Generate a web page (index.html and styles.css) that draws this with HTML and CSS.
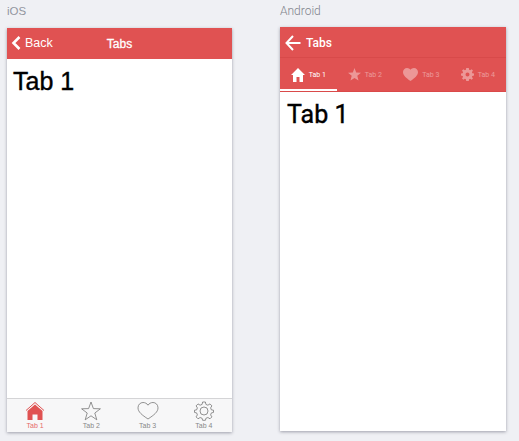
FILE: index.html
```html
<!DOCTYPE html>
<html>
<head>
    <title>Tabs</title>
    <link rel="stylesheet" href="styles.css">
</head>
<body>
    <div class="previews">
        <div class="preview">
            <div class="platform">iOS</div>
            <div class="phone ios">
                <div class="ios-header">
                    <div class="back">
                        <svg width="10" height="16" viewBox="0 0 10 16"><path d="M8.500 2 L2.500 8 L8.500 14" fill="none" stroke="#fff" stroke-width="2.600"/></svg>
                        <span>Back</span>
                    </div>
                    <div class="ios-title">Tabs</div>
                </div>
                <div class="content ios-content">Tab 1</div>
                <div class="ios-tabs">
                    <div class="ios-tab active">
                        <svg width="20" height="20" viewBox="0 0 20 20"><path d="M1 9.500 L10 1.500 L19 9.500" fill="none" stroke="#e05252" stroke-width="1"/><path d="M2.500 10 L10 3.500 L17.500 10 V19 H12.500 V13.500 H7.500 V19 H2.500 Z" fill="#e05252"/></svg>
                        <span>Tab 1</span>
                    </div>
                    <div class="ios-tab">
                        <svg width="20" height="20" viewBox="0 0 20 20"><path d="M10 1 L12.400 7.600 L19.400 7.800 L13.800 12 L15.800 18.800 L10 14.800 L4.200 18.800 L6.200 12 L.6 7.800 L7.600 7.600 Z" fill="none" stroke="#777" stroke-width=".8"/></svg>
                        <span>Tab 2</span>
                    </div>
                    <div class="ios-tab">
                        <svg width="22" height="20" viewBox="0 0 22 20"><path d="M11 18 C5 14 1 11 1 6.800 C1 3.600 3.400 1.500 6 1.500 C8 1.500 10 2.500 11 4.200 C12 2.500 14 1.500 16 1.500 C18.600 1.500 21 3.600 21 6.800 C21 11 17 14 11 18 Z" fill="none" stroke="#777" stroke-width=".8"/></svg>
                        <span>Tab 3</span>
                    </div>
                    <div class="ios-tab">
                        <svg width="20" height="20" viewBox="0 0 20 20" fill="none" stroke="#777" stroke-width=".8"><circle cx="10" cy="10" r="4"/><path d="M8.600 1 H11.400 L11.900 3.400 L13.900 4.200 L16 2.900 L17.900 4.900 L16.600 6.900 L17.400 8.900 L19.500 9.200 V11.400 L17.400 11.900 L16.600 13.900 L17.900 15.900 L16 17.800 L13.900 16.500 L11.900 17.300 L11.400 19.300 H8.600 L8.100 17.300 L6.100 16.500 L4 17.800 L2.100 15.900 L3.400 13.900 L2.600 11.900 L.5 11.400 V9.200 L2.600 8.900 L3.400 6.900 L2.100 4.900 L4 2.900 L6.100 4.200 L8.100 3.400 Z"/></svg>
                        <span>Tab 4</span>
                    </div>
                </div>
            </div>
        </div>
        <div class="preview android-preview">
            <div class="platform">Android</div>
            <div class="phone android">
                <div class="android-bar">
                    <svg width="16" height="16" viewBox="0 0 16 16"><path d="M8 1 L1.500 8 L8 15 M1.500 8 H15.500" fill="none" stroke="#fff" stroke-width="2"/></svg>
                    <span>Tabs</span>
                </div>
                <div class="android-tabs">
                    <div class="android-tab active">
                        <svg width="14" height="14" viewBox="0 0 14 14"><path d="M7 0 L14 7 H12 V14 H8.500 V9 H5.500 V14 H2 V7 H0 Z" fill="#fff"/></svg>
                        <span>Tab 1</span>
                    </div>
                    <div class="android-tab">
                        <svg width="13" height="13" viewBox="0 0 13 13"><path d="M6.500 0 L8.200 4.500 L13 4.800 L9.300 7.800 L10.500 12.500 L6.500 9.900 L2.500 12.500 L3.700 7.800 L0 4.800 L4.800 4.500 Z" fill="#fff"/></svg>
                        <span>Tab 2</span>
                    </div>
                    <div class="android-tab">
                        <svg width="15" height="13" viewBox="0 0 14 13" preserveAspectRatio="none"><path d="M7 13 C3 10 0 7.500 0 4 C0 1.700 1.700 0 3.800 0 C5 0 6.300 .7 7 1.800 C7.700 .7 9 0 10.200 0 C12.300 0 14 1.700 14 4 C14 7.500 11 10 7 13 Z" fill="#fff"/></svg>
                        <span>Tab 3</span>
                    </div>
                    <div class="android-tab">
                        <svg width="13" height="13" viewBox="0 0 13 13"><path fill-rule="evenodd" d="M5.200 0 H7.800 L8.100 1.700 L9.200 2.200 L10.700 1.200 L12 2.700 L10.900 4 L11.300 5.200 L13 5.400 V7.600 L11.300 7.900 L10.900 9 L12 10.300 L10.700 11.800 L9.200 10.800 L8.100 11.300 L7.800 13 H5.200 L4.900 11.300 L3.800 10.800 L2.300 11.800 L1 10.300 L2.100 9 L1.700 7.900 L0 7.600 V5.400 L1.700 5.200 L2.100 4 L1 2.700 L2.300 1.200 L3.800 2.200 L4.900 1.700 Z M6.500 4.500 A2 2 0 1 0 6.500 8.500 A2 2 0 1 0 6.500 4.500 Z" fill="#fff"/></svg>
                        <span>Tab 4</span>
                    </div>
                </div>
                <div class="content android-content">Tab 1</div>
            </div>
        </div>
    </div>
</body>
</html>
```
FILE: styles.css
```css
html, body {
    height: 100%;
}

body {
    margin: 0;
    background-color: #eff0f4;
    overflow: hidden;
}

.previews {
    display: flex;
    padding-left: 7px;
    gap: 48px;
}

.preview {
    width: 225px;
    padding-top: 5px;
}

.android-preview {
    width: 226px;
}

.platform {
    height: 23px;
    font-family: "Liberation Sans", sans-serif;
    font-size: 11.5px;
    line-height: 13px;
    color: #92959e;
}

.android-preview .platform {
    height: 22px;
    font-family: Roboto, sans-serif;
    font-weight: 300;
    font-size: 12px;
    color: #7f838c;
}

.phone {
    display: flex;
    flex-direction: column;
    height: 404px;
    background-color: white;
    box-shadow: 0 1px 3px rgba(60,60,80,0.45);
}

.ios-header {
    position: relative;
    display: flex;
    align-items: center;
    justify-content: center;
    height: 31px;
    background-color: #e05252;
    color: white;
    font-family: "Liberation Sans", Arial, sans-serif;
    font-size: 12.5px;
}

.back {
    position: absolute;
    left: 4px;
    top: 7px;
    display: flex;
    align-items: center;
    gap: 4px;
}

.ios-title {
    font-size: 12px;
    -webkit-text-stroke: 0.3px white;
}

.content {
    flex: 1;
    color: black;
}

.ios-content {
    padding: 7px 6px;
    font-family: "Liberation Sans", Arial, sans-serif;
    font-size: 25px;
    line-height: 30px;
    -webkit-text-stroke: 0.4px black;
}

.ios-tabs {
    display: flex;
    height: 33px;
    background-color: #f7f7f8;
    border-top: 1px solid #d4d4d6;
}

.ios-tab {
    flex: 1;
    display: flex;
    flex-direction: column;
    align-items: center;
    padding-top: 2px;
    font-family: "Liberation Sans", Arial, sans-serif;
    font-size: 7px;
    line-height: 9px;
    color: #888;
}

.ios-tab.active {
    color: #e66a6a;
}

.android-bar {
    display: flex;
    align-items: center;
    gap: 5px;
    height: 29px;
    padding: 1px 0 0 5px;
    background-color: #e05252;
    border-bottom: 1px solid #d84a4a;
    color: white;
    font-family: Roboto, sans-serif;
    font-weight: 500;
    font-size: 12px;
}

.android-tabs {
    display: flex;
    height: 34px;
    box-sizing: border-box;
    background-color: #e05252;
    border-bottom: 1px solid #da4a4a;
}

.android-tab {
    flex: 1;
    display: flex;
    align-items: center;
    justify-content: center;
    gap: 4px;
    padding-top: 2px;
    border-bottom: 2px solid transparent;
    font-family: Roboto, sans-serif;
    font-size: 7px;
    color: white;
}

.android-tab svg,
.android-tab span {
    opacity: 0.4;
}

.android-tab.active {
    border-bottom-color: white;
}

.android-tab.active svg,
.android-tab.active span {
    opacity: 1;
}

.android-content {
    padding: 8px 7px;
    font-family: Roboto, sans-serif;
    font-size: 25px;
    line-height: 30px;
    -webkit-text-stroke: 0.4px black;
}
```
